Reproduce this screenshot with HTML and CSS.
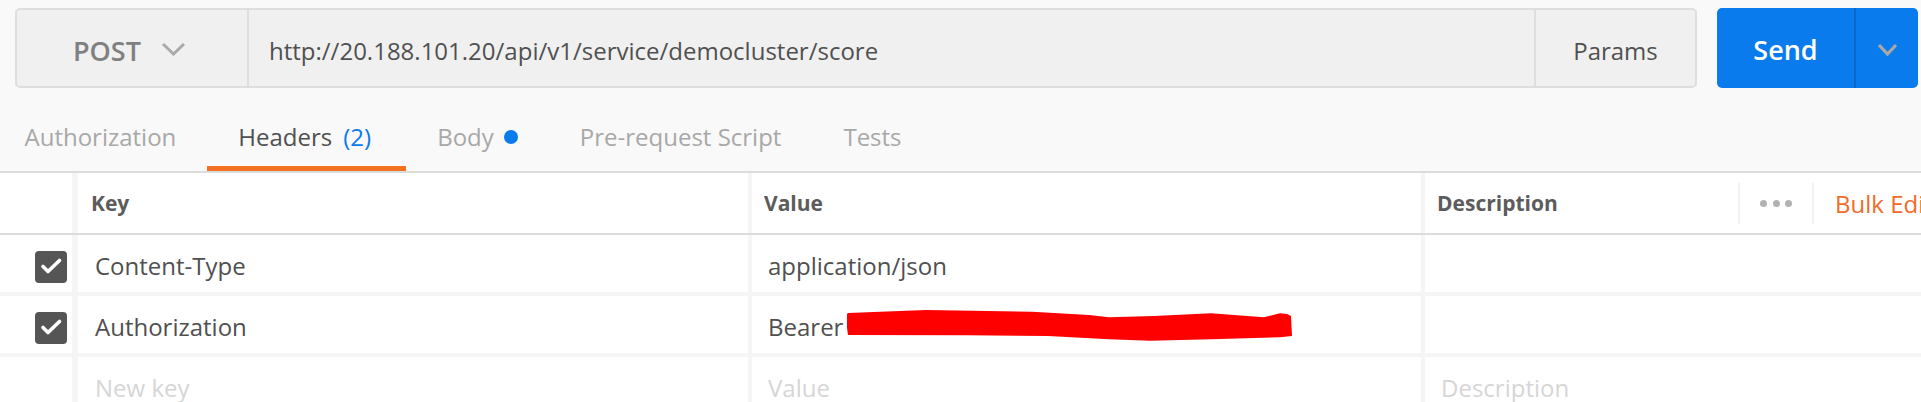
FILE: index.html
```html
<!DOCTYPE html>
<html lang="en">
<head>
<meta charset="utf-8">
<title>Request</title>
<link rel="stylesheet" href="styles.css">
</head>
<body>
<div class="top">
  <div class="request-bar">
    <div class="url-group">
      <div class="method">
        <span class="method-name">POST</span>
        <svg class="chev" width="25" height="14" viewBox="0 0 25 14"><polyline points="2,2 12.5,12 23,2" fill="none" stroke="#aaaaaa" stroke-width="3"/></svg>
      </div>
      <div class="url">http://20.188.101.20/api/v1/service/democluster/score</div>
      <div class="params">Params</div>
    </div>
    <div class="send">
      <span class="send-main">Send</span>
      <span class="send-arrow"><svg width="21" height="13" viewBox="0 0 21 13"><polyline points="2,2 10.5,11 19,2" fill="none" stroke="#a9a9a9" stroke-width="3.2"/></svg></span>
    </div>
  </div>
  <nav class="tabs">
    <div class="tab first">Authorization</div>
    <div class="tab active">Headers<span class="count">(2)</span></div>
    <div class="tab">Body<span class="dot"></span></div>
    <div class="tab">Pre-request Script</div>
    <div class="tab">Tests</div>
  </nav>
</div>
<div class="table">
  <div class="row head">
    <div class="cell c-check"></div>
    <div class="cell c-key">Key</div>
    <div class="cell c-value">Value</div>
    <div class="cell c-desc">
      <span class="desc-label">Description</span>
      <span class="vsep"></span>
      <span class="dots"><i></i><i></i><i></i></span>
      <span class="vsep"></span>
      <span class="bulk">Bulk Edit</span>
    </div>
  </div>
  <div class="row data">
    <div class="cell c-check"><span class="checkbox"><svg width="32" height="32" viewBox="0 0 32 32"><polyline points="8,15.5 13,20.5 24.5,9.5" fill="none" stroke="#ffffff" stroke-width="3.6" stroke-linecap="round" stroke-linejoin="round"/></svg></span></div>
    <div class="cell c-key">Content-Type</div>
    <div class="cell c-value">application/json</div>
    <div class="cell c-desc"></div>
  </div>
  <div class="row data">
    <div class="cell c-check"><span class="checkbox"><svg width="32" height="32" viewBox="0 0 32 32"><polyline points="8,15.5 13,20.5 24.5,9.5" fill="none" stroke="#ffffff" stroke-width="3.6" stroke-linecap="round" stroke-linejoin="round"/></svg></span></div>
    <div class="cell c-key">Authorization</div>
    <div class="cell c-value">Bearer
      <svg class="redact" width="450" height="36" viewBox="0 0 450 36"><polygon fill="#ff0000" points="2,6 3,5 81,2 187,3.7 244,7 264,9.3 309,8 366,5.3 419,9.3 435,5.3 442,6 446,8 447,28 435,29.3 366,31.3 305,32.7 264,31.3 203,28 121,27.3 3,27 2,20"/></svg>
    </div>
    <div class="cell c-desc"></div>
  </div>
  <div class="row data last">
    <div class="cell c-check"></div>
    <div class="cell c-key placeholder">New key</div>
    <div class="cell c-value placeholder">Value</div>
    <div class="cell c-desc placeholder">Description</div>
  </div>
</div>
</body>
</html>
```

FILE: styles.css
```css
* { box-sizing: border-box; }

html, body {
  margin: 0;
  padding: 0;
}

body {
  width: 1921px;
  height: 402px;
  overflow: hidden;
  background: #f9f9f9;
  font-family: "Open Sans", "Noto Sans", sans-serif;
  color: #505050;
  white-space: nowrap;
}

.top {
  padding: 8px 3px 0 15px;
}

.request-bar {
  display: flex;
  gap: 20px;
  height: 80px;
}

.url-group {
  flex: 1;
  display: flex;
  background: #f0f0f0;
  border: 2px solid #dedede;
  border-radius: 5px;
}

.method {
  width: 232px;
  flex-shrink: 0;
  display: flex;
  align-items: center;
  gap: 20px;
  padding: 4px 0 0 56px;
  border-right: 2px solid #dedede;
}

.method-name {
  font-size: 27px;
  font-weight: 600;
  color: #808080;
  line-height: 33px;
}

.chev { margin-top: -2px; }

.url {
  flex: 1;
  display: flex;
  align-items: center;
  padding: 4px 0 0 20px;
  font-size: 24px;
  line-height: 33px;
  color: #505050;
}

.params {
  width: 161px;
  flex-shrink: 0;
  display: flex;
  align-items: center;
  justify-content: center;
  padding-top: 4px;
  border-left: 2px solid #dedede;
  font-size: 24px;
  line-height: 33px;
  color: #505050;
}

.send {
  width: 201px;
  flex-shrink: 0;
  display: flex;
  background: #097bed;
  border-radius: 5px;
  overflow: hidden;
}

.send-main {
  width: 139px;
  display: flex;
  align-items: center;
  justify-content: center;
  padding-top: 2px;
  border-right: 2px solid #0a67c9;
  color: #ffffff;
  font-size: 27px;
  font-weight: 600;
  line-height: 33px;
}

.send-arrow {
  flex: 1;
  display: flex;
  align-items: center;
  justify-content: center;
  padding-top: 2px;
}

.tabs {
  display: flex;
}

.tab {
  display: flex;
  align-items: center;
  padding: 32px 31px 13px;
  line-height: 33px;
  font-size: 24px;
  color: #a8a8a8;
  border-bottom: 5px solid transparent;
}

.tab.first { padding-left: 9.5px; }

.tab.active {
  color: #505050;
  border-bottom-color: #f47023;
  padding-right: 35px;
}

.count {
  margin-left: 11px;
  color: #097bed;
}

.dot {
  width: 14px;
  height: 14px;
  margin-left: 10px;
  border-radius: 50%;
  background: #097bed;
}

.table {
  background: #ffffff;
  border-top: 2px solid #dcdcdc;
}

.row {
  display: flex;
}

.row.head {
  height: 62px;
  border-bottom: 2px solid #dcdcdc;
}

.row.data {
  height: 61px;
  border-bottom: 4px solid #f5f5f5;
}

.row.last { height: 70px; }

.cell {
  flex-shrink: 0;
  font-size: 24px;
  line-height: 33px;
  padding: 14px 16px 0;
}

.c-check {
  width: 78px;
  border-right: 6px solid #f5f5f5;
  padding: 16px 0 0 35px;
}

.c-key {
  width: 674px;
  border-right: 4px solid #f5f5f5;
  padding-left: 17px;
}

.c-value {
  width: 673px;
  border-right: 4px solid #f5f5f5;
  position: relative;
}

.c-desc {
  flex: 1 0 auto;
}

.head .cell {
  display: flex;
  align-items: center;
  padding: 0 0 0 12px;
  font-size: 21px;
  line-height: 29px;
  font-weight: 700;
  color: #5c5c5c;
}

.head .c-key { padding-left: 13px; }

.head .c-check { padding: 0; }

.desc-label {
  width: 301px;
  flex-shrink: 0;
}

.vsep {
  width: 2px;
  height: 41px;
  flex-shrink: 0;
  background: #f2f2f2;
}

.dots {
  display: flex;
  gap: 5.5px;
  margin: 0 20px;
}

.dots i {
  width: 7px;
  height: 7px;
  border-radius: 50%;
  background: #b2b2b2;
}

.bulk {
  margin-left: 21px;
  font-size: 24px;
  line-height: 33px;
  font-weight: 400;
  color: #f26b2b;
}

.checkbox {
  display: block;
  width: 32px;
  height: 32px;
  border-radius: 4px;
  background: #555555;
}

.checkbox svg { display: block; }

.placeholder {
  color: #d6d6d6;
}

.redact {
  position: absolute;
  left: 93px;
  top: 12px;
}
```
